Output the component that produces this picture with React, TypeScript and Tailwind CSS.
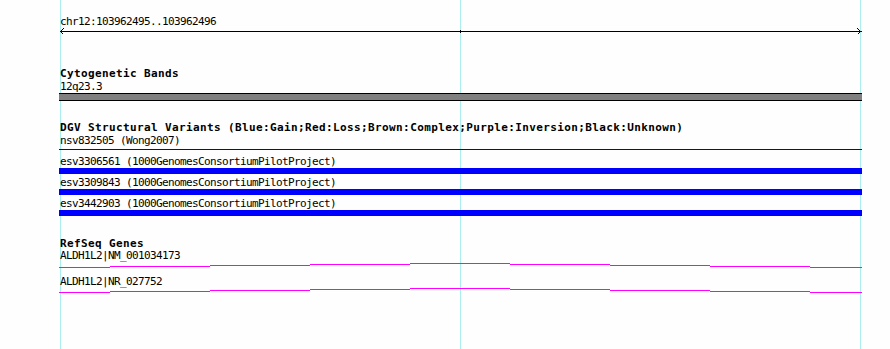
import React from 'react';

const variants = [
  'esv3306561 (1000GenomesConsortiumPilotProject)',
  'esv3309843 (1000GenomesConsortiumPilotProject)',
  'esv3442903 (1000GenomesConsortiumPilotProject)',
];

// hat-shaped intron line, steps every 100px (x relative to track start)
const steps: [number, number, number][] = [
  [0, 51, 4],
  [51, 100, 3],
  [151, 100, 2],
  [251, 100, 1],
  [351, 100, 0],
  [451, 100, 1],
  [551, 100, 2],
  [651, 100, 3],
  [751, 52, 4],
];

const Hat = () => (
  <svg width="803" height="5" className="block" shapeRendering="crispEdges">
    {steps.map(([x, w, y]) => (
      <rect key={x} x={x} y={y} width={w} height={1} fill="#ff00ff" />
    ))}
  </svg>
);

const Ruler = () => (
  <svg width="803" height="7" className="block" shapeRendering="crispEdges">
    <line x1="1" y1="3.5" x2="803" y2="3.5" stroke="#000" strokeWidth="1" />
    <polyline points="4.5,0.5 1.5,3.5 4.5,6.5" fill="none" stroke="#000" strokeWidth="1" />
    <polyline points="798.5,0.5 801.5,3.5 798.5,6.5" fill="none" stroke="#000" strokeWidth="1" />
    <line x1="401.5" y1="2" x2="401.5" y2="5" stroke="#000" strokeWidth="1" />
  </svg>
);

const label = "pl-px leading-[13px] text-[11px] tracking-[-0.62px] whitespace-nowrap";
const title = "pl-px text-[11px] font-bold tracking-[0.38px] whitespace-nowrap";

export default function App() {
  return (
    <div className="relative w-[890px] h-[349px] overflow-hidden bg-[#fdfefd] text-black font-['DejaVu_Sans_Mono',monospace]">
      {/* grid lines sit behind the tracks */}
      <div className="absolute top-0 bottom-0 left-[60px] w-px bg-[#aaeef0]" />
      <div className="absolute top-0 bottom-0 left-[460px] w-px bg-[#aaeef0]" />
      <div className="absolute top-0 bottom-0 left-[860px] w-px bg-[#aaeef0]" />

      <div className="relative ml-[59px] w-[803px] pt-[15px]">
        <div className={`${label} h-[13px]`}>chr12:103962495..103962496</div>
        <Ruler />

        <div className={`${title} mt-[33px] h-[12px] leading-[12px]`}>Cytogenetic Bands</div>
        <div className={`${label} h-[13px]`}>12q23.3</div>
        <div className="h-[8px] border-y border-black bg-[#808080]" />

        <div className={`${title} mt-[20px] h-[13px] leading-[13px]`}>
          DGV Structural Variants (Blue:Gain;Red:Loss;Brown:Complex;Purple:Inversion;Black:Unknown)
        </div>
        <div className={`${label} h-[15px]`}>nsv832505 (Wong2007)</div>
        <div className="h-px bg-[#0000cc]" />

        <div className="mt-[5px] flex flex-col gap-[2px]">
          {variants.map(v => (
            <div key={v}>
              <div className={`${label} h-[13px]`}>{v}</div>
              <div className="h-[6px] bg-[#0000ff]" />
            </div>
          ))}
        </div>

        <div className={`${title} mt-[23px] h-[10px] leading-[10px]`}>RefSeq Genes</div>
        <div className={`${label} h-[14px]`}>ALDH1L2|NM_001034173</div>
        <Hat />
        <div className={`${label} mt-[7px] h-[13px]`}>ALDH1L2|NR_027752</div>
        <Hat />
      </div>
    </div>
  );
}
